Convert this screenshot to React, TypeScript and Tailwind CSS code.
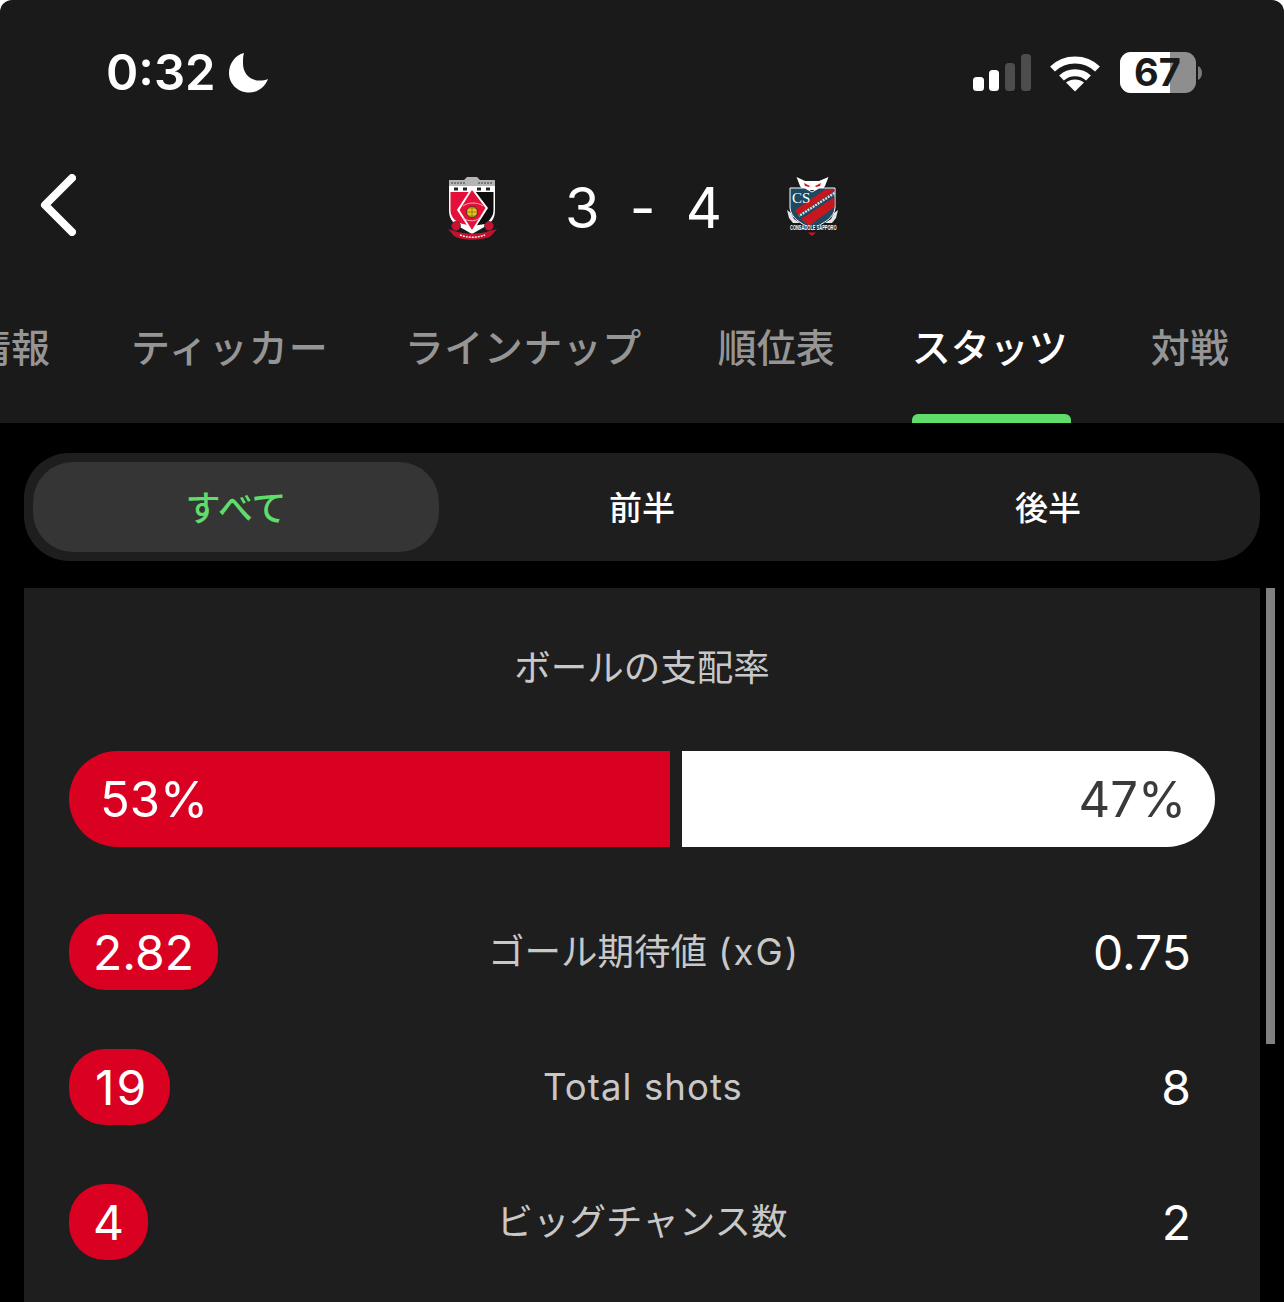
import React from "react";

const sans = "font-['Inter','Noto_Sans_CJK_JP',sans-serif]";

function Moon() {
  return (
    <svg width="40" height="40" viewBox="0 0 40 40" className="ml-[13px]">
      <path d="M15 0 C6 2 0 11 0 20 C0 31 9 39.500 20 39.500 C29 39.500 36 34 39 26 C37 27 33 27.500 31 27.500 C20 27.500 14 20 14 10 C14 6 14 3 15 0 Z" fill="#fff" />
    </svg>
  );
}

function Signal() {
  return (
    <svg width="58" height="38" viewBox="0 0 58 38" className="-mr-[1px]">
      <rect x="0" y="23" width="11" height="14" rx="3.500" fill="#fff" />
      <rect x="16" y="16" width="10" height="21" rx="3.500" fill="#fff" />
      <rect x="32" y="9" width="10" height="28" rx="3.500" fill="#4d4d4d" />
      <rect x="48" y="0" width="10" height="37" rx="3.500" fill="#4d4d4d" />
    </svg>
  );
}

function Wifi() {
  return (
    <svg width="52" height="38" viewBox="0 0 52 38" fill="none" stroke="#fff" strokeWidth="7">
      <path d="M3.500 15 C16 3 36 3 48.500 15" />
      <path d="M12.500 24 C20 17 32 17 39.500 24" />
      <path d="M26 37.500 L17 28.500 C22 24.500 30 24.500 35 28.500 Z" fill="#fff" stroke="none" />
    </svg>
  );
}

function Battery() {
  return (
    <div className="flex items-center">
      <div className="relative flex h-[41px] w-[76px] overflow-hidden rounded-[11px] bg-[#8e8e8e]">
        <div className="h-full w-[50px] bg-white" />
        <span className="absolute left-[14px] top-0 font-['Inter',sans-serif] text-[38px] font-bold leading-[41px] text-[#1a1a1a]">67</span>
      </div>
      <svg width="4" height="14" viewBox="0 0 4 14" className="ml-[2px]">
        <path d="M0 0 C2.500 1 4 4 4 7 C4 10 2.500 13 0 14 Z" fill="#7a7a7a" />
      </svg>
    </div>
  );
}

function UrawaLogo() {
  return (
    <svg width="50" height="66" viewBox="0 0 50 66" className="mt-[2px]">
      <path d="M1 4 L16 4 L19 1 L29 1 L32 4 L47 4 L47 10 L1 10 Z" fill="#b5b5b5" />
      <path d="M3 7 H18 M30 7 H45" stroke="#666" strokeWidth="1.500" strokeDasharray="2 1" />
      <path d="M1 10 L47 10 L47 34 C47 42 44 46 38 50 L24 58 L10 50 C4 46 1 42 1 34 Z" fill="#fff" />
      <path d="M2.500 16 L24 16 L24 50 L11 47 C6 44 2.500 40 2.500 34 Z" fill="#e5103a" />
      <path d="M24 16 L45.500 16 L45.500 34 C45.500 40 42 44 37 48 L24 50 Z" fill="#0d0d0d" />
      <path d="M6 13 H10 M15 13 H19 M29 13 H33 M38 13 H42" stroke="#222" strokeWidth="3" />
      <path d="M24 11 L40 32 L24 57 L9 34 Z" fill="#fff" />
      <path d="M24 14 L37.500 32 L24 54 L11.500 34 Z" fill="#e5103a" />
      <path d="M15 30 C20 26 30 26 35 30 M15 42 C20 46 30 46 33 40" stroke="#f5a5b5" strokeWidth="1" fill="none" />
      <circle cx="24" cy="36" r="5.500" fill="#e8c21c" stroke="#222" strokeWidth="0.800" />
      <path d="M18.500 36 H29.500 M24 30.500 V41.500 M20 32 L28 32 M20 40 L28 40" stroke="#6b5a10" strokeWidth="0.600" />
      <circle cx="8" cy="50" r="4.500" fill="#d01030" stroke="#333" strokeWidth="0.800" />
      <circle cx="41" cy="50" r="4.500" fill="#d01030" stroke="#333" strokeWidth="0.800" />
      <path d="M0 53 L10 56 C18 58 30 58 38 56 L49 53 L43 60 C34 65 14 65 6 60 Z" fill="#c5102c" />
      <path d="M12 59 C20 62 29 62 37 59" stroke="#eee" strokeWidth="1.500" strokeDasharray="2 1" fill="none" />
    </svg>
  );
}

function SapporoLogo() {
  return (
    <svg width="52" height="62" viewBox="0 0 52 62">
      <path d="M10.500 1 L19 5 L33 5 L42.500 1 L39 10 L36 14 L17 14 L14 10 Z" fill="#fff" />
      <path d="M18 7 L24 10 L23 11 L19 10 Z M35 7 L29 10 L30 11 L34 10 Z" fill="#d3141f" />
      <path d="M4 12 L19 12 L26 16 L33 12 L49 12 L49 32 C48 42 38 47 26 53 C14 47 5 42 4 32 Z" fill="#1c4a63" stroke="#fff" strokeWidth="1" />
      <path d="M48.500 13 L48.500 15 L12 39 L9 34 L40 13 Z" fill="#c8161f" />
      <path d="M48.500 17 L13 40" stroke="#dcdcdc" strokeWidth="2.400" strokeDasharray="2 1" />
      <path d="M48.500 21 L48.500 31 L23 50 L15 43 Z" fill="#c8161f" />
      <text x="6" y="27" fontFamily="'Liberation Serif',serif" fontSize="15" fill="#fff">CS</text>
      <path d="M1 34 L5 37 L8 43 L14 47 L7 47 L3 42 Z M52 34 L48 37 L45 43 L39 47 L46 47 L50 42 Z" fill="#e6e6e6" />
      <path d="M2 46 L26 51 L50 46 L50 53 L26 57 L2 53 Z" fill="#1a1a1a" />
      <text transform="translate(4 53.500) scale(1 1.700)" fontFamily="'Liberation Sans',sans-serif" fontSize="4" fontWeight="700" fill="#fff">CONSADOLE SAPPORO</text>
      <path d="M22 56.500 L30 56.500 L26 60 Z" fill="#d3141f" />
    </svg>
  );
}

function Row({ value, label, right, pill }: { value: string; label: React.ReactNode; right: string; pill: string }) {
  return (
    <div className="grid h-[76px] grid-cols-[1fr_auto_1fr] items-center">
      <div className="flex">
        <span className={`flex h-[76px] items-center rounded-[36px] bg-[#da0021] px-[24px] pt-[1px] text-[48px] text-white ${pill}`}>{value}</span>
      </div>
      <span className="text-[36.500px] text-[#c8c8c8]">{label}</span>
      <span className="pr-[24px] pt-[1px] text-right text-[48px] text-white">{right}</span>
    </div>
  );
}

export default function App() {
  return (
    <div className={`h-[1302px] w-[1284px] overflow-hidden bg-white ${sans}`}>
      <header className="h-[423px] rounded-t-[12px] bg-[#1a1a1a]">
        <div className="flex h-[146px] items-start justify-between pl-[106px] pr-[82px] pt-[45px]">
          <div className="flex items-center">
            <span className="text-[49px] font-semibold leading-[56px] text-white">0:32</span>
            <Moon />
          </div>
          <div className="flex items-center gap-[19px] pt-[7px]">
            <Signal />
            <Wifi />
            <Battery />
          </div>
        </div>
        <div className="relative flex h-[120px] items-center justify-center pl-[2px] pt-[4px]">
          <svg width="38" height="62" viewBox="0 0 38 62" fill="none" className="absolute left-[38px] top-[28px]">
            <path d="M34 4 L7 31 L34 58" stroke="#fff" strokeWidth="8" strokeLinecap="round" strokeLinejoin="round" />
          </svg>
          <UrawaLogo />
          <span className="ml-[67px] flex w-[157px] justify-between text-[56px] leading-none text-white">
            <span>3</span>
            <span>-</span>
            <span>4</span>
          </span>
          <div className="-mt-[2px] ml-[64px]">
            <SapporoLogo />
          </div>
        </div>
        <nav className="flex h-[157px] items-start gap-[80px] overflow-hidden pt-[57px] text-[39px] font-medium leading-[50px] text-[#959595]">
          <span className="-ml-[28px]">情報</span>
          <span className="ml-[1px] tracking-[1px]">ティッカー</span>
          <span className="-ml-[4px] tracking-[0.500px]">ラインナップ</span>
          <span className="-ml-[4px]">順位表</span>
          <span className="relative -ml-[3px] flex h-[100px] flex-col items-center text-white">
            スタッツ
            <span className="absolute bottom-0 left-0 h-[9px] w-[159px] rounded-t-[6px] bg-[#5fdd6a]" />
          </span>
          <span className="ml-[3px]">対戦</span>
        </nav>
      </header>

      <main className="h-[879px] bg-black pt-[30px]">
        <div className="ml-[24px] grid h-[108px] w-[1236px] grid-cols-3 items-center rounded-[45px] bg-[#1e1e1e] px-[9px] text-[33px] font-medium">
          <span className="flex h-[90px] w-[406px] items-center justify-center rounded-[40px] bg-[#353535] pt-[3px] text-[35px] text-[#5fdd6a]">すべて</span>
          <span className="pt-[3px] text-center text-white">前半</span>
          <span className="pt-[3px] text-center text-white">後半</span>
        </div>

        <div className="relative ml-[24px] mt-[27px] h-[714px] w-[1236px] bg-[#1e1e1e] px-[45px] pt-[56px]">
          <div className="text-center text-[36.500px] leading-[48px] text-[#c8c8c8]">ボールの支配率</div>
          <div className="mt-[59px] flex h-[96px] gap-[12px] text-[49px]">
            <div className="flex w-[601px] items-center rounded-l-[48px] bg-[#da0021] pl-[31px] pt-[2px] text-white">53%</div>
            <div className="flex w-[533px] items-center justify-end rounded-r-[48px] bg-white pr-[29px] pt-[2px] text-[#3a3a3a]">47%</div>
          </div>
          <div className="mt-[67px] flex flex-col gap-[59px]">
            <Row value="2.82" label={<span className="pl-[4px]">ゴール期待値 <span className="ml-[1px] tracking-[2px]">(xG)</span></span>} right="0.75" pill="" />
            <Row value="19" label={<span className="pl-[2px] tracking-[1.100px]">Total shots</span>} right="8" pill="pl-[26px] pr-[22px] tracking-[2px]" />
            <Row value="4" label="ビッグチャンス数" right="2" pill="" />
          </div>
          <div className="absolute left-[1242px] top-0 h-[456px] w-[9px] bg-[#808080]" />
        </div>
      </main>
    </div>
  );
}
